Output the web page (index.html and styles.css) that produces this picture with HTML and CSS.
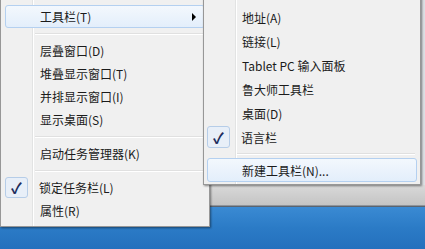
FILE: index.html
```html
<!DOCTYPE html>
<html lang="zh-CN">
<head>
    <meta charset="UTF-8" />
    <title>任务栏菜单</title>
    <link rel="stylesheet" href="styles.css">
</head>
<body>
    <div class="desk"></div>
    <div class="taskbar"></div>

    <ul class="menu main">
        <li class="item hot"><span class="check"></span><span class="label">工具栏(T)</span><span class="arrow"></span></li>
        <li class="sep"></li>
        <li class="item"><span class="check"></span><span class="label">层叠窗口(D)</span></li>
        <li class="item"><span class="check"></span><span class="label">堆叠显示窗口(T)</span></li>
        <li class="item"><span class="check"></span><span class="label">并排显示窗口(I)</span></li>
        <li class="item"><span class="check"></span><span class="label">显示桌面(S)</span></li>
        <li class="sep"></li>
        <li class="item"><span class="check"></span><span class="label">启动任务管理器(K)</span></li>
        <li class="sep"></li>
        <li class="item"><span class="check on">✓</span><span class="label">锁定任务栏(L)</span></li>
        <li class="item"><span class="check"></span><span class="label">属性(R)</span></li>
    </ul>

    <ul class="menu sub">
        <li class="item"><span class="check"></span><span class="label">地址(A)</span></li>
        <li class="item"><span class="check"></span><span class="label">链接(L)</span></li>
        <li class="item"><span class="check"></span><span class="label">Tablet PC 输入面板</span></li>
        <li class="item"><span class="check"></span><span class="label">鲁大师工具栏</span></li>
        <li class="item"><span class="check"></span><span class="label">桌面(D)</span></li>
        <li class="item"><span class="check on">✓</span><span class="label">语言栏</span></li>
        <li class="sep"></li>
        <li class="item hot"><span class="check"></span><span class="label">新建工具栏(N)...</span></li>
    </ul>
</body>
</html>
```

FILE: styles.css
```css
body {
    margin: 0;
    font-family: "Noto Sans CJK SC", "Noto Sans", sans-serif;
    overflow: hidden;
}

.desk {
    height: 207px;
    background: linear-gradient(#dcdfe3 0, #dcdfe3 185px, #d9d9d9 185px, #c4c4c4 205px, #5a6470 206px);
}

.taskbar {
    height: 42px;
    background: linear-gradient(#3a8ad3, #2b7bc6 50%, #2470bd);
}

/* popup menus lie over the desktop */
.menu {
    position: absolute;
    top: -4px;
    margin: 0;
    list-style: none;
    border: 1px solid #979797;
    box-shadow: 1px 1px 2px rgba(0, 0, 0, 0.45);
    /* gutter line next to the check column */
    background: linear-gradient(to right, #f0f0f0 31px, #e2e3e3 31px, #e2e3e3 32px, #fff 32px, #fff 33px, #f0f0f0 33px);
    font-size: 12px;
    color: #1b1b1b;
}

.main {
    left: 0;
    width: 200px;
    padding: 8px 4px 4px 4px;
}

.sub {
    left: 203px;
    width: 210px;
    padding: 8px 3px 2px 3px;
}

.item {
    display: flex;
    align-items: center;
    height: 23px;
    box-sizing: border-box;
    border: 1px solid transparent;
    border-radius: 3px;
}

.sub .item {
    height: 24px;
}

.item.hot {
    border-color: #b4d0f0;
    background: linear-gradient(#f3f8fd, #e3eefb);
}

.check {
    width: 23px;
    height: 100%;
    box-sizing: border-box;
    flex: none;
    display: flex;
    align-items: center;
    justify-content: center;
    font-size: 15px;
    font-weight: bold;
    color: #1d2c5c;
}

.check.on {
    border: 1px solid #b6cde8;
    border-radius: 3px;
    background: #e8eff8;
    margin-left: -1px;
}

.label {
    margin-left: 11px;
    white-space: nowrap;
}

.arrow {
    margin-left: auto;
    margin-right: 8px;
    width: 0;
    height: 0;
    border-top: 4px solid transparent;
    border-bottom: 4px solid transparent;
    border-left: 4px solid #000;
}

.sep {
    height: 0;
    border-top: 1px solid #e0e0e0;
    border-bottom: 1px solid #fff;
    margin: 5px 2px 4px 30px;
}

.sub .sep {
    margin: 4px 2px 3px 30px;
}
```
